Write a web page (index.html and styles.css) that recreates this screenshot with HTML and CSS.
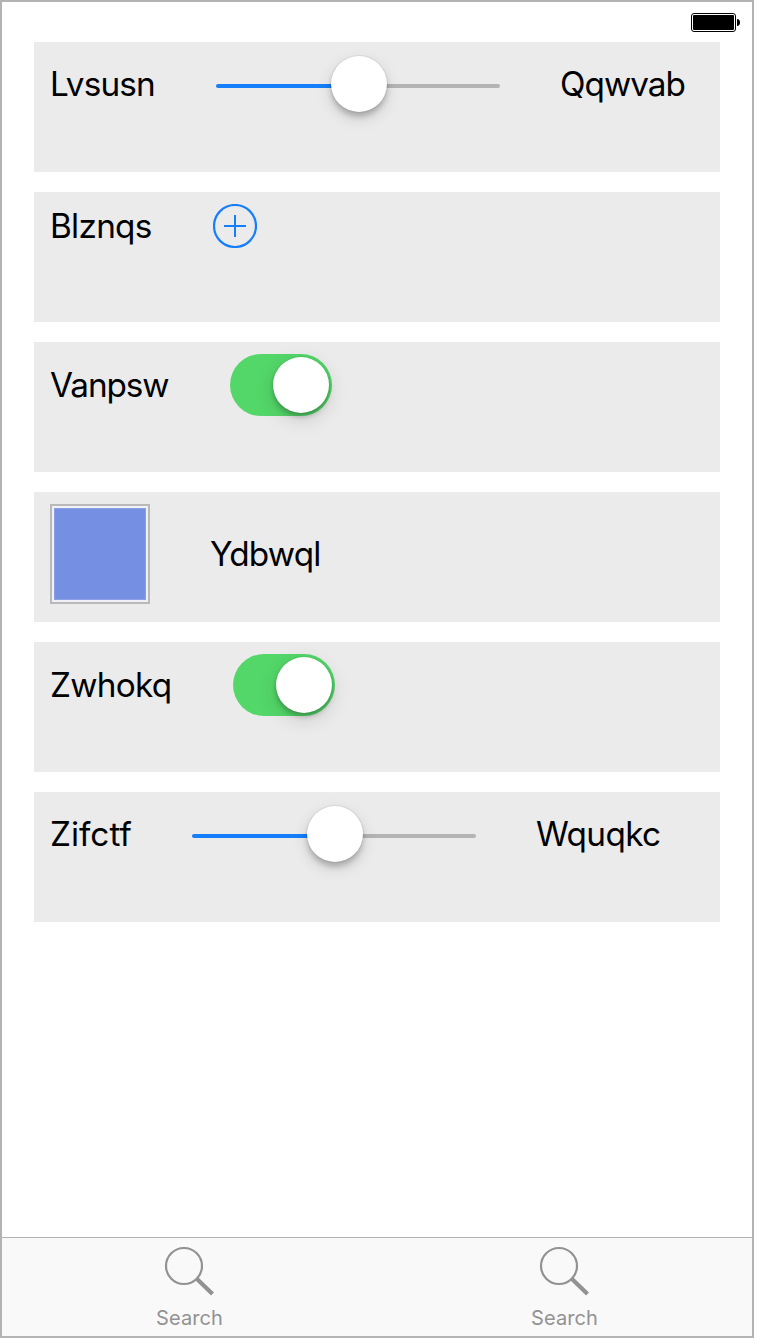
FILE: index.html
```html
<!DOCTYPE html>
<html lang="en">
<head>
<meta charset="utf-8">
<title>Controls</title>
<link rel="stylesheet" href="styles.css">
</head>
<body>
<div class="phone">
  <header class="status">
    <svg class="battery" width="50" height="20" viewBox="0 0 50 20">
      <rect x="1.5" y="1.5" width="44" height="18" rx="2.5" fill="#fff" stroke="#000" stroke-width="1"/>
      <rect x="3" y="3" width="41" height="15" rx="1" fill="#000"/>
      <path d="M47 7Q50 7.3 50 10.5T47 14Z" fill="#000"/>
    </svg>
  </header>
  <main class="list">
    <section class="card">
      <div class="row row-slider">
        <span class="label lvsusn">Lvsusn</span>
        <div class="slider"><i class="fill"></i><i class="knob"></i><i class="rest"></i></div>
        <span class="label qqwvab">Qqwvab</span>
      </div>
    </section>
    <section class="card">
      <div class="row">
        <span class="label blznqs">Blznqs</span>
        <svg width="44" height="44" viewBox="0 0 44 44" fill="none" stroke="#157efb" stroke-width="2">
          <circle cx="22" cy="22" r="21" stroke-width="2.2"/>
          <path d="M11 22H33M22 11V33"/>
        </svg>
      </div>
    </section>
    <section class="card">
      <div class="row">
        <span class="label vanpsw">Vanpsw</span>
        <div class="switch"><i class="knob"></i></div>
      </div>
    </section>
    <section class="card">
      <div class="row">
        <div class="swatch"><div class="color"></div></div>
        <span class="label ydbwql">Ydbwql</span>
      </div>
    </section>
    <section class="card">
      <div class="row">
        <span class="label zwhokq">Zwhokq</span>
        <div class="switch"><i class="knob"></i></div>
      </div>
    </section>
    <section class="card">
      <div class="row row-slider">
        <span class="label zifctf">Zifctf</span>
        <div class="slider"><i class="fill"></i><i class="knob"></i><i class="rest"></i></div>
        <span class="label wquqkc">Wquqkc</span>
      </div>
    </section>
  </main>
  <nav class="tabs">
    <div class="tab">
      <svg width="52" height="52" viewBox="0 0 52 52" fill="none" stroke="#929292">
        <circle cx="20" cy="20" r="18" stroke-width="2.2"/>
        <path d="M32.5 32.5L48.5 48" stroke-width="4.2"/>
      </svg>
      <span class="tab-text">Search</span>
    </div>
    <div class="tab">
      <svg width="52" height="52" viewBox="0 0 52 52" fill="none" stroke="#929292">
        <circle cx="20" cy="20" r="18" stroke-width="2.2"/>
        <path d="M32.5 32.5L48.5 48" stroke-width="4.2"/>
      </svg>
      <span class="tab-text">Search</span>
    </div>
  </nav>
</div>
</body>
</html>
```
FILE: styles.css
```css
* { box-sizing: border-box; }
body { margin: 0; background: #fff; font-family: Inter, "Liberation Sans", sans-serif; color: #000; }
.phone { width: 754px; height: 1338px; border: 2px solid #b3b3b3; display: flex; flex-direction: column; }
.status { height: 40px; padding: 10px 12px 0 0; display: flex; justify-content: flex-end; }
.battery { display: block; }
.list { flex: 1; padding: 0 32px; display: flex; flex-direction: column; gap: 20px; }
.card { height: 130px; background: #ebebeb; padding: 12px 16px; }
.row { display: flex; align-items: center; gap: 60px; }
.row-slider { height: 60px; }
.row > * { flex: none; }
.label { font-size: 33.3px; line-height: 40px; height: 40px; white-space: nowrap; letter-spacing: -0.7px; }
.lvsusn { width: 106px; letter-spacing: -0.8px; }
.qqwvab { width: 126px; letter-spacing: -0.95px; }
.blznqs { width: 103px; }
.vanpsw { width: 120px; letter-spacing: -1.05px; }
.ydbwql { width: 112px; letter-spacing: -0.8px; }
.zwhokq { width: 123px; }
.zifctf { width: 82px; letter-spacing: 0; }
.wquqkc { width: 126px; letter-spacing: -0.6px; }
.knob { flex: none; width: 56px; height: 56px; border-radius: 50%; background: #fff; }
.slider { width: 284px; height: 60px; display: flex; align-items: center; }
.slider .knob { box-shadow: 0 0 0 1px rgba(0,0,0,.06), 0 5px 5px rgba(0,0,0,.18), 0 6px 16px rgba(0,0,0,.14); z-index: 1; }
.fill, .rest { height: 4px; margin-top: 4px; }
.fill { width: 117px; background: #157efb; border-radius: 2px 0 0 2px; margin-right: -2px; }
.rest { flex: 1; background: #b4b4b4; border-radius: 0 2px 2px 0; margin-left: -2px; }
.switch { width: 102px; height: 62px; border-radius: 31px; background: #53d769; display: flex; justify-content: flex-end; padding: 3px; }
.switch .knob { box-shadow: 0 0 2px rgba(0,0,0,.16), 0 4px 5px rgba(0,0,0,.2), 0 6px 20px rgba(0,0,0,.14); }
.swatch { width: 100px; height: 100px; border: 2px solid #b9b9b9; background: #f0f1f6; padding: 2px; }
.color { height: 92px; background: #758fe2; border: 1px solid #8ba0e5; }
.tabs { height: 99px; border-top: 1px solid #b3b3b3; background: #f9f9f9; display: flex; }
.tab { flex: 1; display: flex; flex-direction: column; align-items: center; padding-top: 8px; }
.tab svg { display: block; }
.tab-text { font-size: 20px; line-height: 24px; margin-top: 8px; color: #929292; letter-spacing: .1px; }
```
